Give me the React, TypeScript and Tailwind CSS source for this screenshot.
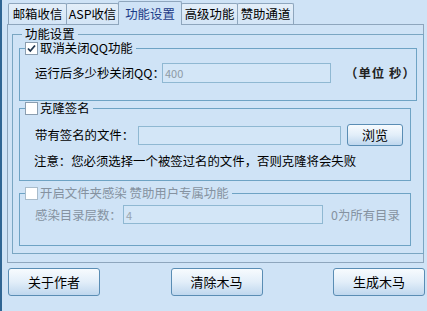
const font = { fontFamily: '"Noto Sans CJK SC", "Liberation Sans", sans-serif' };

function Check({ checked, disabled }: { checked?: boolean; disabled?: boolean }) {
  return (
    <span
      className={
        "inline-flex h-[13px] w-[13px] shrink-0 items-center justify-center border bg-white " +
        (disabled ? "border-[#a9bccb]" : "border-[#8b9eb0]")
      }
    >
      {checked && (
        <svg width="11" height="11" viewBox="0 0 11 11">
          <path d="M2 5.5 L4.3 8 L9 2.5" fill="none" stroke="#21364f" strokeWidth="1.8" />
        </svg>
      )}
    </span>
  );
}

function Tab({ label, w, active }: { label: string; w: string; active?: boolean }) {
  if (active) {
    return (
      <div
        className={
          "relative z-10 -mb-px -ml-px flex h-[24px] items-center justify-center rounded-t-[2px] border border-b-0 border-[#8ea6bd] bg-[#cfe3f6] text-[#1b3a86] " +
          w
        }
      >
        {label}
      </div>
    );
  }
  return (
    <div
      className={
        "-ml-px flex h-[21px] items-center justify-center rounded-t-[2px] border border-b-0 border-[#8ea6bd] bg-gradient-to-b from-[#e4eff9] to-[#d3e5f6] text-black first:ml-0 " +
        w
      }
    >
      {label}
    </div>
  );
}

function Btn({ label, className }: { label: string; className: string }) {
  return (
    <button
      className={
        "flex items-center justify-center rounded-[3px] border border-[#5a8db4] bg-gradient-to-b from-[#f7fbfe] via-[#e2eef9] to-[#bfd7ee] text-[13px] text-black " +
        className
      }
    >
      {label}
    </button>
  );
}

export default function App() {
  return (
    <div
      className="h-[311px] w-[427px] overflow-hidden whitespace-nowrap border-l-2 border-[#2f6593] bg-[#cfe3f6] pl-[5px] pt-[2px] text-[12.4px] leading-[14px] text-black"
      style={font}
    >
      {/* tabs */}
      <div className="flex h-[22px] items-end pl-[1px]">
        <Tab label="邮箱收信" w="w-[59px]" />
        <Tab label="ASP收信" w="w-[53px]" />
        <Tab label="功能设置" w="w-[64px]" active />
        <Tab label="高级功能" w="w-[57px]" />
        <Tab label="赞助通道" w="w-[57px]" />
      </div>

      {/* panel */}
      <div className="h-[239px] w-[417px] border border-[#8ea6bd] px-[4px] pt-[3px]">
        <fieldset className="h-[226px] w-[407px] border border-[#7aa6c2] px-[6px]">
          <legend className="ml-[3px] h-[13px] px-[3px] leading-[13px]">功能设置</legend>

          <fieldset className="h-[60px] w-[392px] border border-[#6ea3c4]">
            <legend className="ml-[5px] flex h-[14px] items-center gap-[2px] pr-[3px]">
              <Check checked />
              <span>取消关闭QQ功能</span>
            </legend>
            <div className="flex items-center pl-[15px] pt-[8px]">
              <span className="w-[127px]">运行后多少秒关闭QQ：</span>
              <div className="flex h-[20px] w-[169px] items-center border border-[#8fb8d2] bg-[#d3e6f7] px-[2px] text-[11px] text-[#8e9aa5]">
                400
              </div>
              <span className="ml-[14px] font-bold tracking-[1px] text-[#222]">（单位 秒）</span>
            </div>
          </fieldset>

          <fieldset className="h-[80px] w-[392px] border border-[#6ea3c4]">
            <legend className="ml-[5px] flex h-[14px] items-center gap-[2px] pr-[3px]">
              <Check />
              <span>克隆签名</span>
            </legend>
            <div className="flex items-center pl-[15px] pt-[9px]">
              <span className="w-[103px]">带有签名的文件：</span>
              <div className="h-[19px] w-[203px] border border-[#8fb8d2] bg-[#d3e6f7]" />
              <Btn label="浏览" className="ml-[6px] h-[22px] w-[56px]" />
            </div>
            <div className="pl-[14px] pt-[8px]">注意：您必须选择一个被签过名的文件，否则克隆将会失败</div>
          </fieldset>

          <fieldset className="mt-[5px] h-[60px] w-[392px] border border-[#6ea3c4] text-[#8592a0]">
            <legend className="ml-[5px] flex h-[14px] items-center gap-[2px] pr-[3px]">
              <Check disabled />
              <span>开启文件夹感染 赞助用户专属功能</span>
            </legend>
            <div className="flex items-center pl-[15px] pt-[5px]">
              <span className="w-[88px]">感染目录层数：</span>
              <div className="flex h-[19px] w-[200px] items-center border border-[#8fb8d2] bg-[#d3e6f7] px-[2px] text-[11px] text-[#98a4ae]">
                4
              </div>
              <span className="ml-[8px]">0为所有目录</span>
            </div>
          </fieldset>
        </fieldset>
      </div>

      {/* bottom buttons */}
      <div className="mt-[5px] flex w-[417px] items-center justify-between pl-[1px]">
        <Btn label="关于作者" className="h-[28px] w-[92px]" />
        <Btn label="清除木马" className="h-[28px] w-[92px]" />
        <Btn label="生成木马" className="-mr-[1px] h-[28px] w-[92px]" />
      </div>
    </div>
  );
}
